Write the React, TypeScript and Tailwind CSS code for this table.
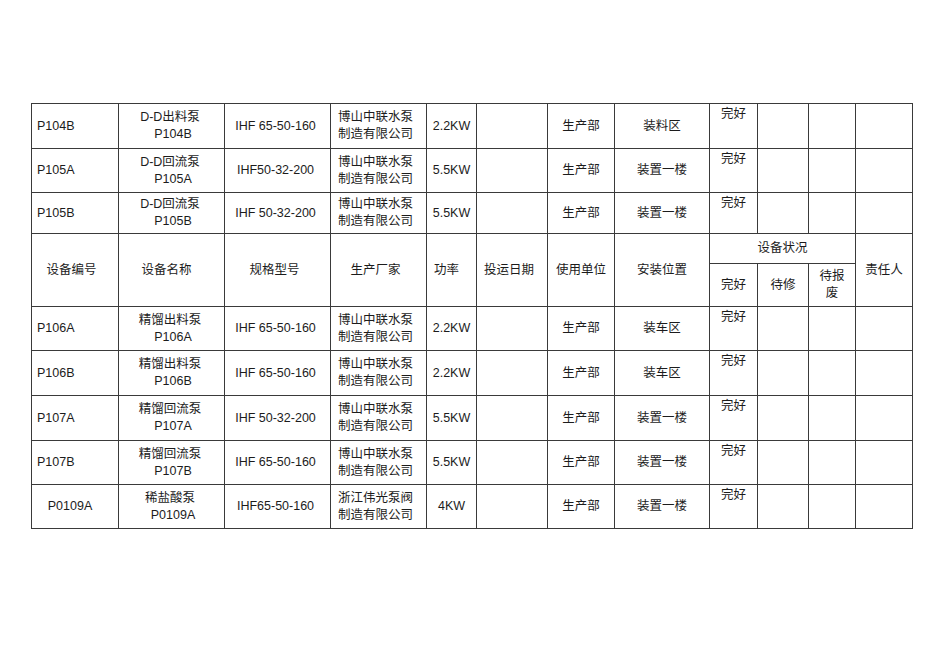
import React from 'react'

type Row = {
  code: string
  name: string
  spec: string
  maker: string
  power: string
  h: string
  center?: boolean
}

const maker1 = '博山中联水泵'

const topRows: Row[] = [
  { code: 'P104B', name: 'D-D出料泵', spec: 'IHF 65-50-160', maker: maker1, power: '2.2KW', h: 'h-[45px]' },
  { code: 'P105A', name: 'D-D回流泵', spec: 'IHF50-32-200', maker: maker1, power: '5.5KW', h: 'h-[44px]' },
  { code: 'P105B', name: 'D-D回流泵', spec: 'IHF 50-32-200', maker: maker1, power: '5.5KW', h: 'h-[41px]' },
]

const places = ['装料区', '装置一楼', '装置一楼']

const bottomRows: (Row & { place: string })[] = [
  { code: 'P106A', name: '精馏出料泵', spec: 'IHF 65-50-160', maker: maker1, power: '2.2KW', h: 'h-[44px]', place: '装车区' },
  { code: 'P106B', name: '精馏出料泵', spec: 'IHF 65-50-160', maker: maker1, power: '2.2KW', h: 'h-[45px]', place: '装车区' },
  { code: 'P107A', name: '精馏回流泵', spec: 'IHF 50-32-200', maker: maker1, power: '5.5KW', h: 'h-[45px]', place: '装置一楼' },
  { code: 'P107B', name: '精馏回流泵', spec: 'IHF 65-50-160', maker: maker1, power: '5.5KW', h: 'h-[44px]', place: '装置一楼' },
  { code: 'P0109A', name: '稀盐酸泵', spec: 'IHF65-50-160', maker: '浙江伟光泵阀', power: '4KW', h: 'h-[44px]', place: '装置一楼', center: true },
]

const cell = 'border border-[#3a3a3a] p-0 align-middle'

const DataRow = ({ row, place }: { row: Row; place: string }) => (
  <tr className={row.h}>
    <td className={`${cell} ${row.center ? 'text-center pr-[10px]' : 'text-left pl-[5px]'}`}>{row.code}</td>
    <td className={`${cell} text-center leading-[17px]`}>
      <div className="pr-[3px]">{row.name}</div>
      <div className="pl-[3px]">{row.code}</div>
    </td>
    <td className={`${cell} text-center pr-[4px]`}>{row.spec}</td>
    <td className={`${cell} text-center pr-[6px] leading-[17px]`}>
      <div>{row.maker}</div>
      <div>制造有限公司</div>
    </td>
    <td className={`${cell} text-center`}>{row.power}</td>
    <td className={cell}></td>
    <td className={`${cell} text-center`}>生产部</td>
    <td className={`${cell} text-center`}>{place}</td>
    <td className={`${cell} text-center pt-[2px] leading-[17px]`} style={{ verticalAlign: 'top' }}>
      完好
    </td>
    <td className={cell}></td>
    <td className={cell}></td>
    <td className={cell}></td>
  </tr>
)

const App = () => {
  const widths = [87, 106, 106, 96, 50, 71, 67, 95, 48, 51, 47, 57]
  return (
    <div
      className="w-[950px] h-[672px] bg-white pt-[103px] pl-[31px] text-[#1c1c1c] text-[12.5px]"
      style={{ fontFamily: '"Liberation Sans", "Noto Sans CJK SC", sans-serif' }}
    >
      <table className="table-fixed border-collapse w-[882px]">
        <colgroup>
          {widths.map((w, i) => (
            <col key={i} style={{ width: w }} />
          ))}
        </colgroup>
        <tbody>
          {topRows.map((r, i) => (
            <DataRow key={i} row={r} place={places[i]} />
          ))}
          {/* header block sits in the middle of the sheet */}
          <tr className="h-[30px]">
            <td rowSpan={2} className={`${cell} text-center pr-[7px]`}>设备编号</td>
            <td rowSpan={2} className={`${cell} text-center pr-[10px]`}>设备名称</td>
            <td rowSpan={2} className={`${cell} text-center pr-[6px]`}>规格型号</td>
            <td rowSpan={2} className={`${cell} text-center pr-[6px]`}>生产厂家</td>
            <td rowSpan={2} className={`${cell} text-left pl-[7px]`}>功率</td>
            <td rowSpan={2} className={`${cell} text-center pr-[6px]`}>投运日期</td>
            <td rowSpan={2} className={`${cell} text-center`}>使用单位</td>
            <td rowSpan={2} className={`${cell} text-center`}>安装位置</td>
            <td colSpan={3} className={`${cell} text-center`}>设备状况</td>
            <td rowSpan={2} className={`${cell} text-center`}>责任人</td>
          </tr>
          <tr className="h-[43px]">
            <td className={`${cell} text-center`}>完好</td>
            <td className={`${cell} text-center`}>待修</td>
            <td className={`${cell} text-center leading-[17px]`}>
              <div>待报</div>
              <div>废</div>
            </td>
          </tr>
          {bottomRows.map((r, i) => (
            <DataRow key={i} row={r} place={r.place} />
          ))}
        </tbody>
      </table>
    </div>
  )
}

export default App
